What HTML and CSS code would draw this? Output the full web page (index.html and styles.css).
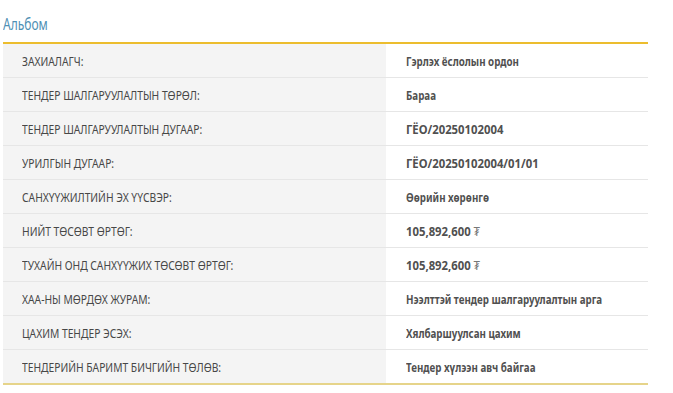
FILE: index.html
```html
<!DOCTYPE html>
<html lang="mn">
<head>
<meta charset="utf-8">
<title>Альбом</title>
<link rel="stylesheet" href="styles.css">
</head>
<body>
<div class="panel">
  <h2 class="title"><span class="nar">Альбом</span></h2>
  <table class="info">
    <tbody>
      <tr><th><span class="nar">ЗАХИАЛАГЧ:</span></th><td><span class="nar">Гэрлэх ёслолын ордон</span></td></tr>
      <tr><th><span class="nar">ТЕНДЕР ШАЛГАРУУЛАЛТЫН ТӨРӨЛ:</span></th><td><span class="nar">Бараа</span></td></tr>
      <tr><th><span class="nar">ТЕНДЕР ШАЛГАРУУЛАЛТЫН ДУГААР:</span></th><td><span class="nar num">ГЁО/20250102004</span></td></tr>
      <tr><th><span class="nar">УРИЛГЫН ДУГААР:</span></th><td><span class="nar num">ГЁО/20250102004/01/01</span></td></tr>
      <tr><th><span class="nar">САНХҮҮЖИЛТИЙН ЭХ ҮҮСВЭР:</span></th><td><span class="nar">Өөрийн хөрөнгө</span></td></tr>
      <tr><th><span class="nar">НИЙТ ТӨСӨВТ ӨРТӨГ:</span></th><td><span class="nar num">105,892,600 <span class="cur">₮</span></span></td></tr>
      <tr><th><span class="nar">ТУХАЙН ОНД САНХҮҮЖИХ ТӨСӨВТ ӨРТӨГ:</span></th><td><span class="nar num">105,892,600 <span class="cur">₮</span></span></td></tr>
      <tr><th><span class="nar">ХАА-НЫ МӨРДӨХ ЖУРАМ:</span></th><td><span class="nar">Нээлттэй тендер шалгаруулалтын арга</span></td></tr>
      <tr><th><span class="nar">ЦАХИМ ТЕНДЕР ЭСЭХ:</span></th><td><span class="nar">Хялбаршуулсан цахим</span></td></tr>
      <tr><th><span class="nar">ТЕНДЕРИЙН БАРИМТ БИЧГИЙН ТӨЛӨВ:</span></th><td><span class="nar">Тендер хүлээн авч байгаа</span></td></tr>
    </tbody>
  </table>
</div>
</body>
</html>
```
FILE: styles.css
```css
html, body {
  margin: 0;
  padding: 0;
  background: #ffffff;
}

body {
  font-family: "Noto Sans", "DejaVu Sans", sans-serif;
  color: #555555;
}

.panel {
  width: 645px;
  padding: 0 0 0 3px;
}

.nar {
  display: inline-block;
  white-space: nowrap;
  transform: scaleX(0.79);
  transform-origin: 0 50%;
}

.title {
  margin: 0;
  padding-top: 14px;
  height: 42px;
  box-sizing: border-box;
  font-size: 16px;
  font-weight: normal;
  color: #4f90b4;
  line-height: 20px;
}

.title .nar {
  transform: scaleX(0.75);
}

.info {
  width: 100%;
  table-layout: fixed;
  border-collapse: collapse;
  border-top: 2px solid #ecbd2e;
  border-bottom: 2px solid #e6d48a;
}

.info th,
.info td {
  height: 33px;
  padding: 0;
  border-bottom: 1px solid #e6e6e6;
  font-size: 13px;
  vertical-align: middle;
  text-align: left;
  white-space: nowrap;
  overflow: hidden;
}

.info th {
  width: 364px;
  padding-left: 19px;
  background: #f4f4f4;
  font-weight: normal;
  color: #474747;
}

.info td {
  padding-left: 20px;
  font-weight: bold;
  color: #505050;
}

.info td .nar {
  transform: scaleX(0.75);
}

.info td .num {
  transform: scaleX(0.87);
}

.info tr:last-child th,
.info tr:last-child td {
  border-bottom: none;
}

.cur {
  font-weight: normal;
  color: #777777;
}
```
